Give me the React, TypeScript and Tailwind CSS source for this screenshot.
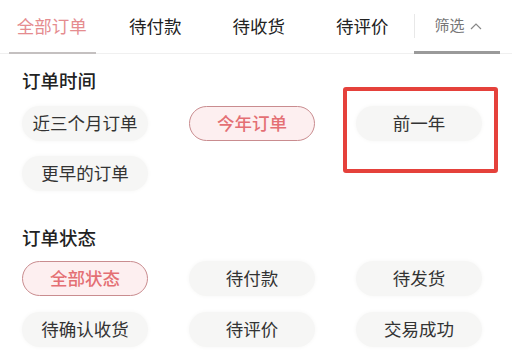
import React from 'react'

const tabs = ['全部订单', '待付款', '待收货', '待评价']
const timeOpts = ['近三个月订单', '今年订单', '前一年', '更早的订单']
const statusOpts = ['全部状态', '待付款', '待发货', '待确认收货', '待评价', '交易成功']

function Chip({ label, active }: { label: string; active?: boolean }) {
  return (
    <div
      className={
        active
          ? 'h-[35px] flex items-center justify-center rounded-full border-[1.5px] border-[#c98c8f] bg-[#fdeff0] text-[#e46f74] text-[17.5px] font-medium'
          : 'h-[35px] flex items-center justify-center rounded-full bg-[#f6f6f5] text-[#333] text-[17.5px] shadow-[0_0_4px_#f6f6f5]'
      }
    >
      {label}
    </div>
  )
}

export default function App() {
  return (
    <div className="relative w-[512px] h-[352px] bg-white overflow-hidden" style={{ fontFamily: '"Noto Sans CJK SC", "Noto Sans", sans-serif' }}>
      <div className="relative flex h-[54px] border-b border-[#f0f0f0]">
        {tabs.map((t, i) => (
          <div key={t} className="relative w-[103.5px] flex items-center justify-center pb-[1px]">
            <span className={i === 0 ? 'text-[17.5px] text-[#e58c8f]' : 'text-[17.5px] text-[#222]'}>{t}</span>
            {i === 0 && <div className="absolute left-[9px] right-[8px] bottom-[-1px] h-[2px] bg-[#c4c0c0]" />}
          </div>
        ))}
        <div className="relative flex-1 flex items-center">
          <div className="w-px h-[24px] bg-[#e8e8e8] mb-[2px]" />
          <div className="w-[86px] flex items-center justify-center gap-[5px] text-[15px] text-[#777] mb-[2px]">
            筛选
            <svg width="12" height="8" viewBox="0 0 12 8" className="mt-[1px]">
              <path d="M1 7 L6 2 L11 7" fill="none" stroke="#888" strokeWidth="1.2" />
            </svg>
          </div>
          <div className="absolute left-0 w-[86px] bottom-[-1px] h-[3px] bg-[#9a9a9a]" />
        </div>
      </div>

      <div className="pl-[22px] pr-[30px]">
        <div className="mt-[14px] h-[24px] leading-[24px] text-[18.5px] font-medium text-[#222]">订单时间</div>
        <div className="mt-[14px] grid grid-cols-3 gap-x-[41px] gap-y-[15px]">
          {timeOpts.map((o, i) => (
            <Chip key={o} label={o} active={i === 1} />
          ))}
        </div>

        <div className="mt-[34px] h-[24px] leading-[24px] text-[18.5px] font-medium text-[#222]">订单状态</div>
        <div className="mt-[12px] grid grid-cols-3 gap-x-[41px] gap-y-[16px]">
          {statusOpts.map((o, i) => (
            <Chip key={o} label={o} active={i === 0} />
          ))}
        </div>
      </div>

      <div className="absolute left-[343px] top-[87px] w-[155px] h-[86px] border-[4px] border-[#e5413b] rounded-[3px]" />
    </div>
  )
}
